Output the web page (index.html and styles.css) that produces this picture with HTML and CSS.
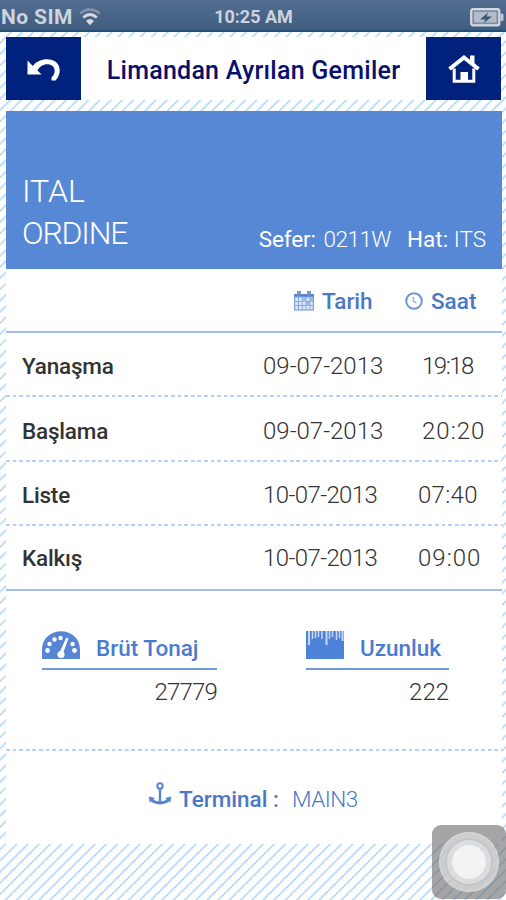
FILE: index.html
```html
<!DOCTYPE html>
<html lang="tr">
<head>
    <meta charset="UTF-8">
    <meta name="viewport" content="width=device-width, initial-scale=1.0">
    <title>Limandan Ayrılan Gemiler</title>
    <link rel="stylesheet" href="styles.css">
</head>
<body>
    <div class="status-bar">
        <div class="carrier">
            <span class="carrier-name">No SIM</span>
            <svg class="wifi" width="22" height="18" viewBox="0 0 22 18">
                <path d="M1 5.5Q11-2.5 21 5.5" fill="none" stroke="#8192a9" stroke-width="2.6"/>
                <path d="M4.2 9.5Q11 3.5 17.8 9.5" fill="none" stroke="#d5dae0" stroke-width="2.8"/>
                <path d="M7 13Q11 9 15 13L11 17.3Z" fill="#d5dae0"/>
            </svg>
        </div>
        <span class="clock">10:25 AM</span>
        <svg class="battery" width="34" height="19" viewBox="0 0 34 19">
            <rect x="1" y="1" width="28.5" height="16.5" rx="2" fill="#b2bcca" stroke="#d3d9e0" stroke-width="1.8"/>
            <rect x="3.2" y="3.2" width="24" height="12" fill="none" stroke="#6f819a" stroke-width="1.2"/>
            <path d="M30.5 5.5h1.5q1.5 0 1.5 1.5v4.5q0 1.5-1.5 1.5h-1.5z" fill="#c3cad3"/>
            <path d="M10 11.5l8-7-1.2 4H22l-8 6.5 1.2-3.5z" fill="#3f5778"/>
        </svg>
    </div>

    <div class="page">
        <div class="header">
            <a class="nav-button">
                <svg width="36" height="26" viewBox="0 0 36 26">
                    <path d="M1.5 4.5V18.5H15.5L11.5 14.5C14 9.500 19 7.500 23.500 8.500C29.500 10 30.500 16.500 25.500 21.500V24.500H29.500C36.500 17 34.500 6.500 26 4C19 2 11 4.500 6.800 10Z" fill="#fff"/>
                </svg>
            </a>
            <h1 class="title">Limandan Ayrılan Gemiler</h1>
            <a class="nav-button">
                <svg width="32" height="30" viewBox="0 0 32 30">
                    <path d="M6.2 14.5v12.8H25.8V14.5" fill="none" stroke="#fff" stroke-width="3"/>
                    <path d="M1.5 15L16 3.5L30.5 15" fill="none" stroke="#fff" stroke-width="4"/>
                    <path d="M22 1.5h4.5v9l-4.5-3zM12.5 18h7.5v9h-7.5z" fill="#fff"/>
                </svg>
            </a>
        </div>

        <div class="ship">
            <h2 class="ship-name">ITAL<br><span class="narrow">ORDINE</span></h2>
            <div class="voyage">
                <span class="sefer">Sefer: <span class="thin">0211W</span></span>
                <span class="hat">Hat: <span class="thin">ITS</span></span>
            </div>
        </div>

        <div class="panel">
            <div class="table-head">
                <div class="head-cell tarih">
                    <svg width="20" height="20" viewBox="0 0 20 20">
                        <path d="M0 3h20v4H0z" fill="#5785d2"/>
                        <path d="M3 0h4v4H3zM13 0h4v4h-4z" fill="#7298d8"/>
                        <rect x=".6" y="6" width="18.8" height="13" fill="#dfe9f8" stroke="#7fa1db" stroke-width="1.2"/>
                        <path d="M0 10.5h20M0 14.5h20M4.5 7v12M8.2 7v12M12 7v12M15.8 7v12" stroke="#84a5dd" stroke-width="1"/>
                        <path d="M8 7h4v4H8zM12 11h4v4h-4zM16 7h3v4h-3z" fill="#9db8e5"/>
                    </svg>
                    <span>Tarih</span>
                </div>
                <div class="head-cell saat">
                    <svg width="18" height="18" viewBox="0 0 18 18">
                        <circle cx="9" cy="9" r="7.8" fill="none" stroke="#6e95d7" stroke-width="2"/>
                        <path d="M8.5 5v4.3l3 1.7" fill="none" stroke="#8baae0" stroke-width="1.4"/>
                    </svg>
                    <span>Saat</span>
                </div>
            </div>

            <div class="row">
                <span class="label">Yanaşma</span>
                <span class="date">09-07-2013</span>
                <span class="time indent tight">19:18</span>
            </div>
            <div class="row">
                <span class="label">Başlama</span>
                <span class="date">09-07-2013</span>
                <span class="time indent wide">20:20</span>
            </div>
            <div class="row">
                <span class="label">Liste</span>
                <span class="date narrow-date">10-07-2013</span>
                <span class="time">07:40</span>
            </div>
            <div class="row last">
                <span class="label">Kalkış</span>
                <span class="date narrow-date">10-07-2013</span>
                <span class="time wide">09:00</span>
            </div>

            <div class="measures">
                <div class="measure tonnage">
                    <div class="measure-head">
                        <svg width="38" height="28" viewBox="0 0 38 28">
                            <path d="M0 28V19C0-6 38-6 38 19v9z" fill="#5785d3"/>
                            <g fill="#fff">
                                <circle cx="5.5" cy="19.5" r="2.4"/>
                                <circle cx="7.5" cy="13" r="2.2"/>
                                <circle cx="12.5" cy="8.5" r="2.2"/>
                                <circle cx="18.5" cy="7" r="2.2"/>
                                <circle cx="30.5" cy="13" r="2.2"/>
                                <circle cx="32.5" cy="19.5" r="2.4"/>
                                <circle cx="19" cy="23.5" r="3.6"/>
                                <path d="M17.8 21L24.3 6.5L26.5 7.5L21.2 22z"/>
                            </g>
                        </svg>
                        <span>Brüt Tonaj</span>
                    </div>
                    <div class="measure-value tonnage-value">27779</div>
                </div>
                <div class="measure length">
                    <div class="measure-head">
                        <svg width="38" height="28" viewBox="0 0 38 28">
                            <path d="M0 0h38v28H0z" fill="#4d82d8"/>
                            <path d="M6.5 0v8M9.5 0v7M12.5 0v6M16 0v8M23.5 0v8M26.5 0v6M30.5 0v9M33.5 0v7" stroke="#c6d8f5" stroke-width="1.5"/>
                            <path d="M3 0v14M20.5 0v14M36.5 0v10" stroke="#c6d8f5" stroke-width="2"/>
                        </svg>
                        <span>Uzunluk</span>
                    </div>
                    <div class="measure-value">222</div>
                </div>
            </div>

            <div class="terminal">
                <svg width="22" height="23" viewBox="0 0 22 23">
                    <circle cx="11" cy="4" r="2.7" fill="none" stroke="#5785d3" stroke-width="2"/>
                    <path d="M11 6.5v14" fill="none" stroke="#5785d3" stroke-width="2.4"/>
                    <path d="M2.5 17C4 22 18 22 19.5 17" fill="none" stroke="#5785d3" stroke-width="2.8"/>
                    <path d="M0 14.5l6 1.5-5.5 4.5zM22 14.5L16 16l5.5 4.5zM7.5 20h7L11 22.8z" fill="#5785d3"/>
                </svg>
                <span class="terminal-label">Terminal :</span>
                <span class="terminal-value">MAIN3</span>
            </div>
        </div>
    </div>

    <div class="assistive-touch">
        <div class="ring"><div class="ring-middle"><div class="ring-inner"></div></div></div>
    </div>
</body>
</html>
```
FILE: styles.css
```css
* {
    box-sizing: border-box;
}

body {
    font-family: Roboto, "Liberation Sans", sans-serif;
    margin: 0;
    height: 900px;
    overflow: hidden;
    color: #333;
    background: repeating-linear-gradient(135deg, #fff 0, #fff 5.4px, #c3e0fb 6px, #b9dcfb 7.3px, #fff 7.92px);
}

svg {
    display: block;
    flex-shrink: 0;
}

/* Phone status bar */
.status-bar {
    display: grid;
    grid-template-columns: 1fr 82px 1fr;
    align-items: center;
    height: 32px;
    padding: 2px 2px 0 1px;
    background: linear-gradient(#526d90, #405d80);
    border-bottom: 2px solid #205078;
    color: #ccd4de;
    font-weight: bold;
    line-height: 30px;
}

.carrier {
    display: flex;
    align-items: center;
    gap: 5px;
}

.carrier-name {
    width: 73px;
    font-size: 21px;
    white-space: nowrap;
    letter-spacing: 0.4px;
}

.clock {
    padding-left: 2px;
    font-size: 18px;
    text-align: center;
    white-space: nowrap;
}

.battery {
    justify-self: end;
}

.page {
    padding: 5px 4px 0 6px;
}

/* Header with the two buttons */
.header {
    display: flex;
    justify-content: space-between;
    height: 63px;
    margin-right: 1px;
    background-color: #fff;
}

.nav-button {
    display: flex;
    align-items: center;
    justify-content: center;
    width: 75px;
    background-color: #00227d;
}

.title {
    margin: 0;
    font-size: 25px;
    font-weight: 500;
    line-height: 67px;
    color: #08106d;
    white-space: nowrap;
    letter-spacing: 0.25px;
}

/* Ship block */
.ship {
    display: flex;
    justify-content: space-between;
    align-items: flex-end;
    height: 158px;
    margin-top: 11px;
    padding: 0 15px 14px 16px;
    background-color: #5788d5;
    color: #fff;
}

.ship-name {
    margin: 0;
    padding-bottom: 1px;
    font-size: 32px;
    font-weight: 300;
    line-height: 42px;
}

.narrow {
    letter-spacing: -1.2px;
}

.voyage {
    display: flex;
    gap: 16px;
    padding: 0 1px 1px 0;
    font-size: 22.5px;
    line-height: 29px;
    white-space: nowrap;
}

.sefer {
    letter-spacing: -0.1px;
}

.thin {
    font-weight: 300;
}

.sefer .thin {
    padding-left: 2px;
    letter-spacing: -0.5px;
}

/* Details */
.panel {
    background-color: #fff;
}

.table-head {
    display: flex;
    align-items: center;
    height: 64px;
    padding: 0 0 0 288px;
    border-bottom: 2px solid #a3bdee;
    color: #4a78c6;
    font-size: 22.5px;
    font-weight: 500;
}

.head-cell {
    display: flex;
    align-items: center;
    gap: 8px;
    padding-top: 1px;
}

.tarih {
    width: 111px;
}

/* Rows are divided by a line of short dashes */
.row,
.measures {
    background: repeating-linear-gradient(90deg, #b5d0f8 0, #b5d0f8 3.5px, #fff 4px, #fff 6.6px) left bottom / 100% 2px no-repeat;
}

.row {
    display: flex;
    align-items: center;
    height: 64.4px;
    padding: 2px 0 0 16px;
    font-size: 24px;
    white-space: nowrap;
}

.row.last {
    background: none;
    border-bottom: 2px solid #a3bdee;
}

.label {
    width: 241px;
    font-size: 22.5px;
    font-weight: 500;
    letter-spacing: -0.2px;
}

.date {
    width: 155px;
    font-weight: 300;
}

.narrow-date {
    letter-spacing: -0.6px;
}

.time {
    font-weight: 300;
    letter-spacing: 0.3px;
}

.wide {
    letter-spacing: 1px;
}

.tight {
    letter-spacing: -1.5px;
}

.indent {
    padding-left: 4px;
}

.measures {
    display: flex;
    height: 160px;
    padding: 38px 0 0 36px;
}

.tonnage {
    width: 175px;
    margin-right: 89px;
}

.length {
    width: 143px;
}

.measure-head {
    display: flex;
    align-items: center;
    gap: 16px;
    height: 41px;
    padding-bottom: 7px;
    border-bottom: 2px solid #7099df;
    color: #4a7bd0;
    font-size: 22.5px;
    font-weight: 500;
    white-space: nowrap;
}

.measure-head span {
    padding-top: 6px;
}

.measure-value {
    text-align: right;
    font-size: 24px;
    font-weight: 300;
    line-height: 44px;
}

.tonnage-value {
    letter-spacing: -0.8px;
}

.terminal {
    display: flex;
    align-items: center;
    height: 93px;
    padding: 3px 0 0 143px;
    color: #4a78c6;
    font-size: 22.5px;
}

.terminal svg {
    margin: -10px 8px 0 0;
}

.terminal-label {
    width: 113px;
    font-weight: 500;
}

.terminal-value {
    font-weight: 300;
    letter-spacing: -0.5px;
}

/* Floating touch button */
.assistive-touch {
    position: absolute;
    left: 432px;
    top: 825px;
    display: flex;
    align-items: center;
    justify-content: center;
    width: 74px;
    height: 74px;
    border-radius: 9px;
    background-color: rgba(110, 110, 110, 0.62);
}

.ring,
.ring-middle,
.ring-inner {
    display: flex;
    align-items: center;
    justify-content: center;
    border-radius: 50%;
}

.ring {
    width: 60px;
    height: 60px;
    background-color: rgba(240, 240, 240, 0.55);
    border: 1px solid rgba(245, 245, 245, 0.3);
}

.ring-middle {
    width: 48px;
    height: 48px;
    background-color: rgba(245, 245, 245, 0.4);
    border: 2px solid rgba(160, 165, 175, 0.4);
}

.ring-inner {
    width: 36px;
    height: 36px;
    background-color: rgba(255, 255, 255, 0.65);
    border: 1px solid #d5dae0;
}
```
